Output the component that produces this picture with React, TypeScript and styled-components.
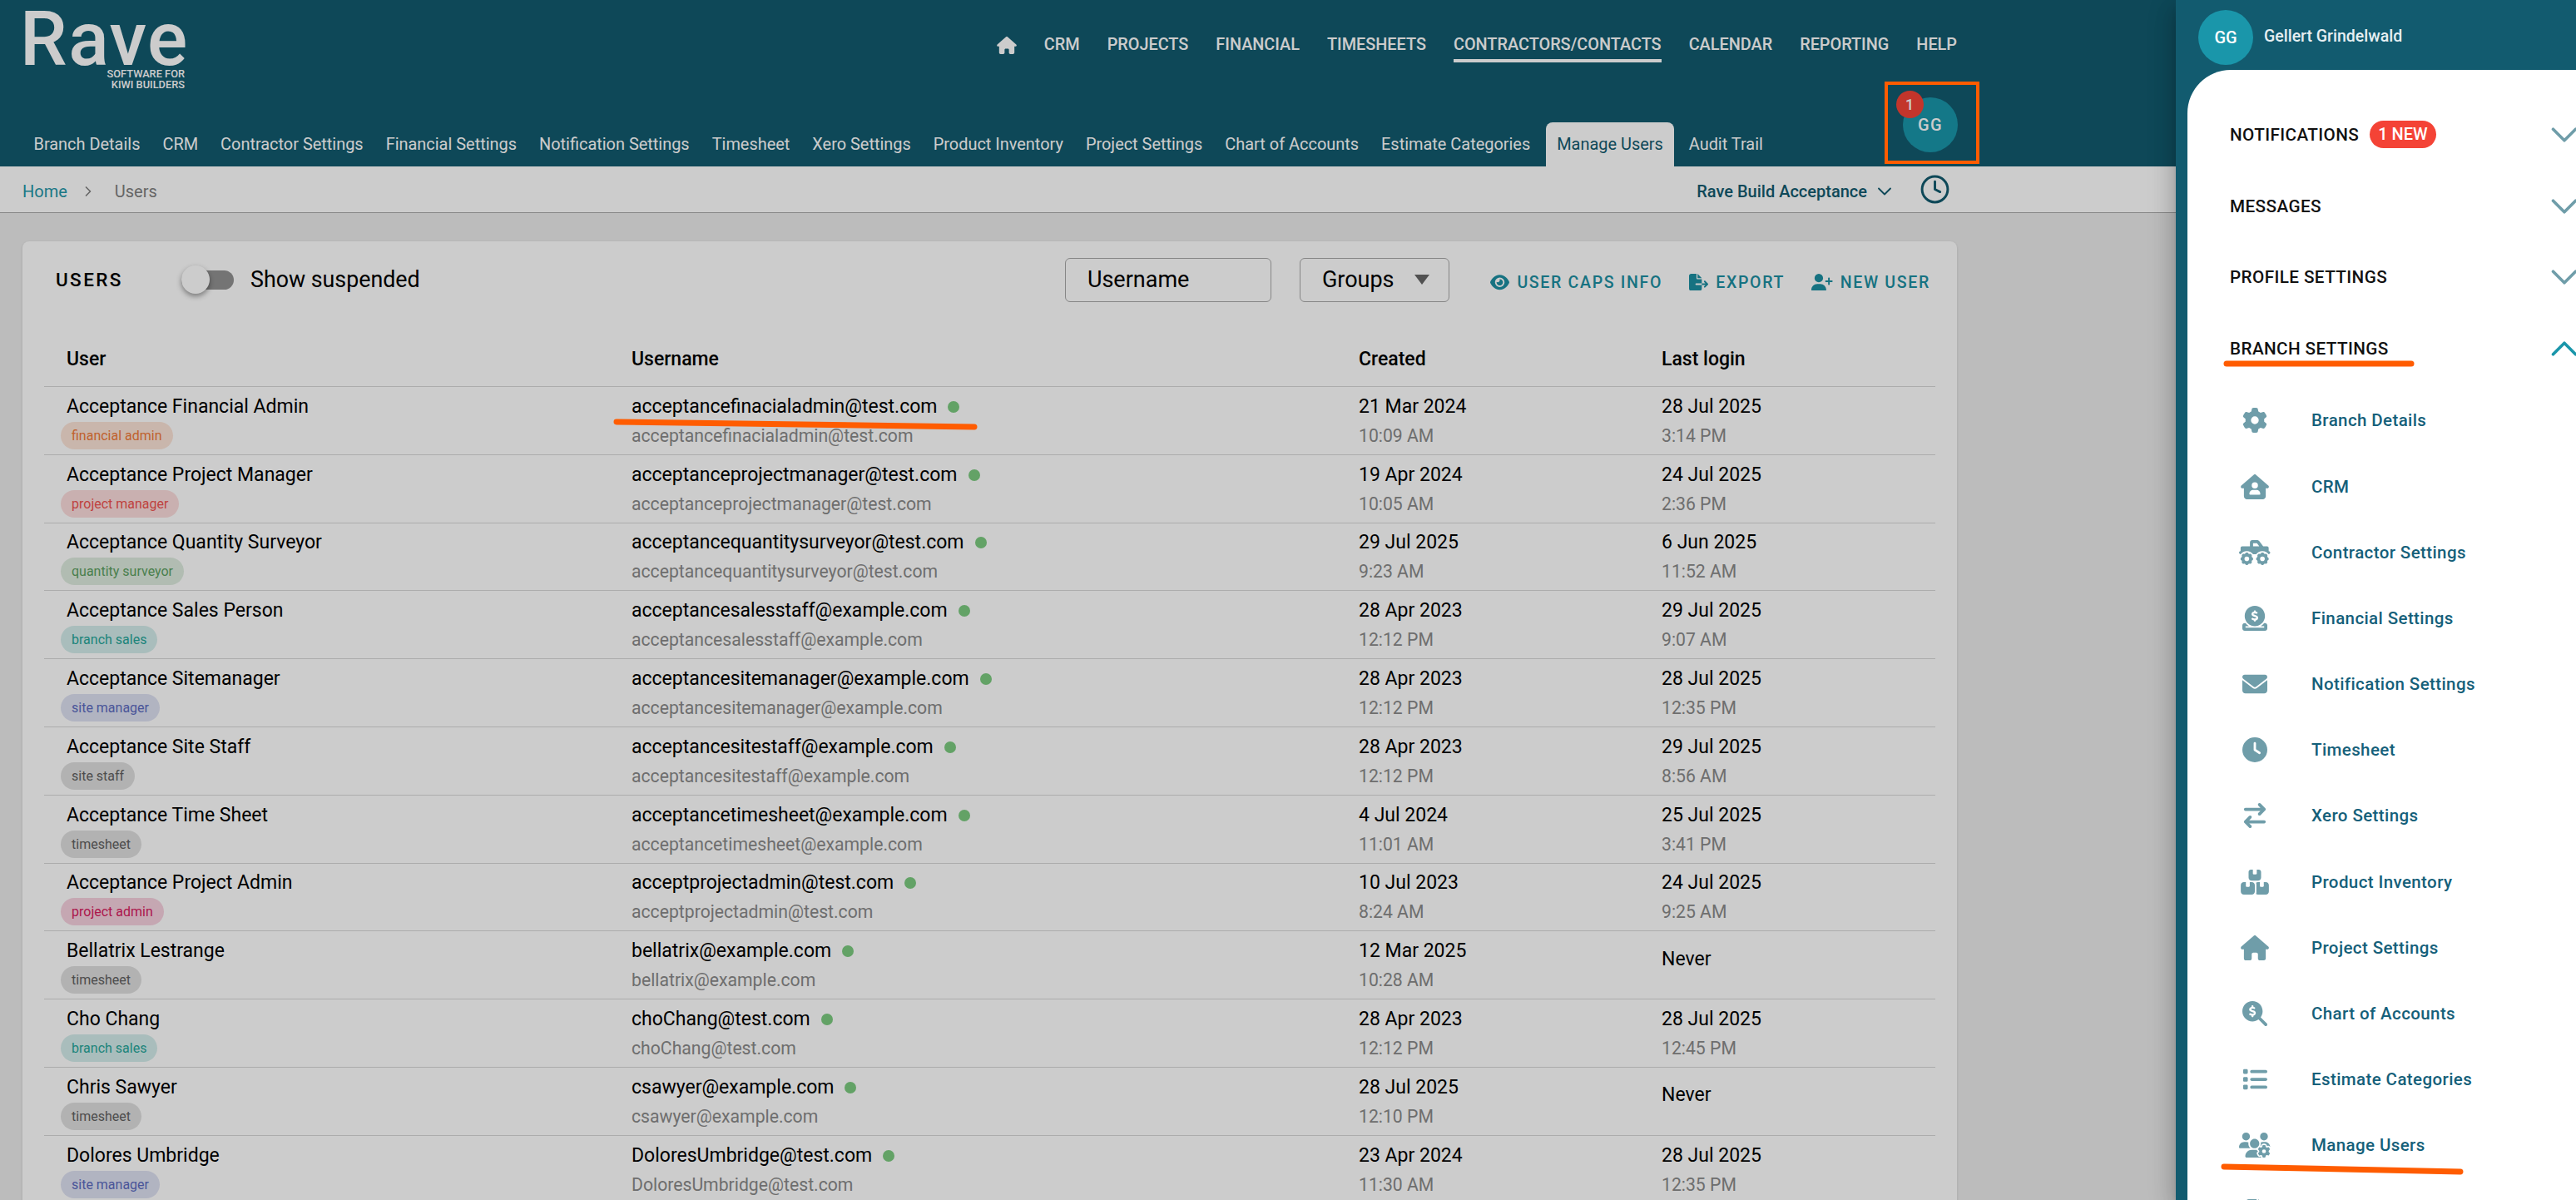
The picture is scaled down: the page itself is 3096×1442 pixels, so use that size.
import React from 'react';
import styled, { createGlobalStyle } from 'styled-components';
import {
  FaGear,
  FaHouseUser,
  FaTruckMonster,
  FaCircleDollarToSlot,
  FaEnvelope,
  FaClock,
  FaArrowRightArrowLeft,
  FaBoxesStacked,
  FaHouse,
  FaMagnifyingGlassDollar,
  FaList,
  FaUsersGear,
  FaFileExport,
  FaUserPlus,
  FaEye,
  FaFileLines,
} from 'react-icons/fa6';
import { FiChevronDown, FiChevronRight, FiChevronUp, FiClock } from 'react-icons/fi';

const teal = '#125b6f';
const accent = '#1a96aa';
const orange = '#ff5c00';

const GlobalStyle = createGlobalStyle`
  html, body {
    margin: 0;
    padding: 0;
    width: 3096px;
    height: 1442px;
    overflow: hidden;
    background: #ebebeb;
    font-family: Roboto, "Liberation Sans", sans-serif;
  }
  * { box-sizing: border-box; }
`;

const Page = styled.div`
  position: relative;
  width: 3096px;
  height: 1442px;
  overflow: hidden;
`;

const Header = styled.header`
  height: 200px;
  background: ${teal};
  color: #fff;
  display: flex;
  flex-direction: column;
  justify-content: space-between;
`;

const HeaderTop = styled.div`
  display: flex;
  justify-content: space-between;
  height: 100px;
  padding: 14px 744px 0 27px;
`;

const Logo = styled.div`
  display: flex;
  flex-direction: column;
  align-items: flex-end;
  width: 195px;
`;

const LogoWord = styled.div`
  width: 199px;
  margin-right: -1px;
  font-size: 90px;
  font-weight: 500;
  line-height: 68px;
  height: 70px;
  letter-spacing: 1.5px;
  color: #fff;
  white-space: nowrap;
`;

const LogoTag = styled.div`
  font-size: 12.8px;
  line-height: 13px;
  font-weight: 500;
`;

const MainNav = styled.nav`
  display: flex;
  align-items: center;
  gap: 33px;
  height: 80px;
`;

const MainNavItem = styled.a<{ $active?: boolean }>`
  font-size: 19.85px;
  font-weight: 500;
  line-height: 34px;
  margin-top: 4px;
  border-bottom: 4px solid ${(p) => (p.$active ? '#fff' : 'transparent')};
`;

const HomeIcon = styled(FaHouse)`
  width: 24px;
  height: 21px;
`;

const HeaderBottom = styled.div`
  display: flex;
  align-items: flex-end;
  justify-content: space-between;
  padding: 0 743px 0 27px;
`;

const SubNav = styled.nav`
  display: flex;
  align-items: flex-end;
`;

const SubNavItem = styled.a<{ $active?: boolean }>`
  height: 53px;
  line-height: 54px;
  padding: 0 13.5px;
  margin: ${(p) => (p.$active ? '0 4px 0 5px' : '0')};
  font-size: 19.93px;
  white-space: nowrap;
  border-radius: 8px 8px 0 0;
  background: ${(p) => (p.$active ? '#fff' : 'transparent')};
  color: ${(p) => (p.$active ? teal : '#fff')};
`;

const AvatarWrap = styled.div`
  position: relative;
  margin-bottom: 17px;
`;

const UserAvatar = styled.div<{ $spaced?: boolean }>`
  width: 66px;
  height: 66px;
  border-radius: 50%;
  display: flex;
  align-items: center;
  justify-content: center;
  background: ${accent};
  color: #fff;
  font-size: 20px;
  font-weight: 500;
  letter-spacing: ${(p) => (p.$spaced ? '1.5px' : '0')};
  flex-shrink: 0;
`;

const AvatarBadge = styled.span`
  position: absolute;
  top: -8.5px;
  left: -8.5px;
  width: 33px;
  height: 33px;
  border-radius: 50%;
  background: #f44336;
  color: #fff;
  font-size: 18px;
  font-weight: 500;
  display: flex;
  align-items: center;
  justify-content: center;
`;

const Crumbs = styled.div`
  height: 56px;
  background: #fff;
  border-bottom: 1px solid #aaa;
  display: flex;
  align-items: center;
  padding: 4px 0 0 27px;
  font-size: 20px;
`;

const CrumbLink = styled.a`
  color: #2396a8;
`;

const CrumbSep = styled(FiChevronRight)`
  color: #808080;
  margin: 0 22px 0 15px;
  width: 20px;
  height: 20px;
`;

const CrumbCurrent = styled.span`
  color: #808080;
`;

const BranchPicker = styled.div`
  margin-left: auto;
  margin-right: 752px;
  display: flex;
  align-items: center;
  color: ${teal};
  font-size: 20px;
  font-weight: 500;
  gap: 7px;
`;

const PickerCaret = styled(FiChevronDown)`
  width: 28px;
  height: 28px;
  stroke-width: 1.6;
`;

const ClockBtn = styled(FiClock)`
  width: 37px;
  height: 37px;
  margin-left: 21px;
  margin-top: -4px;
  stroke-width: 1.9;
`;

const Content = styled.main`
  height: 1186px;
  background: #ebebeb;
  padding: 34px 744px 0 27px;
`;

const Card = styled.section`
  background: #fff;
  border-radius: 8px;
  height: 1200px;
  padding: 0 26px;
  box-shadow: 0 1px 3px rgba(0, 0, 0, 0.12);
`;

const Toolbar = styled.div`
  display: flex;
  align-items: center;
  height: 92px;
  padding: 0 6px 0 13px;
`;

const CardTitle = styled.h2`
  margin: 0 73px 0 1px;
  width: 78px;
  font-size: 22.5px;
  font-weight: 500;
  letter-spacing: 2.4px;
  white-space: nowrap;
  color: #000;
`;

const Toggle = styled.div`
  position: relative;
  width: 63px;
  height: 23px;
  margin-right: 20px;
  border-radius: 12px;
  background: #929292;
`;

const ToggleThumb = styled.span`
  position: absolute;
  top: -6px;
  left: 0;
  width: 34px;
  height: 34px;
  border-radius: 50%;
  background: #fff;
  box-shadow: 0 3px 6px rgba(0, 0, 0, 0.4);
`;

const ToggleLabel = styled.span`
  font-size: 26.8px;
  color: #000;
`;

const Spacer = styled.div`
  flex: 1;
`;

const FilterBox = styled.div<{ $w: number }>`
  width: ${(p) => p.$w}px;
  height: 53px;
  border: 1.5px solid #a8a8a8;
  border-radius: 6px;
  display: flex;
  align-items: center;
  justify-content: space-between;
  padding: 0 23px 0 26px;
  font-size: 27px;
  color: #000;
  margin-right: 34px;
`;

const FilterArrow = styled.span`
  width: 0;
  height: 0;
  border-left: 9px solid transparent;
  border-right: 9px solid transparent;
  border-top: 12px solid #666;
`;

const Actions = styled.div`
  display: flex;
  align-items: center;
  gap: 32px;
  margin-left: 15.5px;
`;

const ActionBtn = styled.a<{ $iconW: number }>`
  display: flex;
  align-items: center;
  gap: 9px;
  color: #1c8fa2;
  font-size: 19.5px;
  font-weight: 500;
  letter-spacing: 1.7px;
  margin-top: 6px;
  svg {
    width: ${(p) => p.$iconW}px;
    height: 20.5px;
  }
`;

const Grid = styled.div`
  display: grid;
  grid-template-columns: 679px 874px 364px 1fr;
  padding-left: 27px;
  align-items: center;
`;

const TableHead = styled(Grid)`
  height: 83px;
  padding-top: 17px;
  font-size: 23px;
  font-weight: 500;
  color: #000;
  border-bottom: 1px solid #d8d8d8;
`;

const Row = styled(Grid)`
  height: 81.8px;
  padding-top: 2px;
  border-bottom: 1px solid #d8d8d8;
`;

const Stack = styled.div<{ $lifted?: boolean }>`
  display: flex;
  flex-direction: column;
  align-items: flex-start;
  padding-bottom: ${(p) => (p.$lifted ? '16px' : '0')};
`;

const Primary = styled.div`
  display: flex;
  align-items: center;
  gap: 13px;
  font-size: 23px;
  line-height: 32px;
  height: 32px;
  color: #000;
  white-space: nowrap;
`;

const Secondary = styled.div`
  margin-top: 3px;
  font-size: 21.2px;
  line-height: 32px;
  color: #8a8a8a;
  white-space: nowrap;
`;

const Pill = styled.span<{ $color: string }>`
  margin-top: 2px;
  margin-left: -7px;
  padding: 0 13px;
  height: 33px;
  line-height: 33px;
  font-size: 16px;
  border-radius: 17px;
  color: ${(p) => p.$color};
  background: ${(p) => p.$color}33;
  white-space: nowrap;
`;

const OnlineDot = styled.span`
  width: 14px;
  height: 14px;
  border-radius: 50%;
  background: #7ccb80;
`;

const Dim = styled.div`
  position: absolute;
  inset: 0;
  background: rgba(0, 0, 0, 0.2);
`;

const Drawer = styled.aside`
  position: absolute;
  top: 0;
  right: 0;
  bottom: 0;
  width: 481px;
  background: ${teal};
  box-shadow: 0 8px 10px -5px rgba(0, 0, 0, 0.2), 0 16px 24px 2px rgba(0, 0, 0, 0.14),
    0 6px 30px 5px rgba(0, 0, 0, 0.12);
  display: flex;
  flex-direction: column;
`;

const DrawerHead = styled.div`
  height: 84px;
  display: flex;
  align-items: center;
  padding: 6px 0 0 27px;
  gap: 13px;
`;

const DrawerName = styled.div`
  color: #e6eff2;
  font-size: 19.5px;
  font-weight: 500;
  margin-bottom: 4px;
`;

const DrawerBody = styled.div`
  flex: 1;
  margin-left: 14px;
  background: #fff;
  border-top-left-radius: 52px;
  padding: 35px 0 0 51px;
  overflow: hidden;
`;

const Section = styled.div`
  height: 85.7px;
  display: flex;
  align-items: center;
  color: #111;
  font-size: 20.7px;
  font-weight: 500;
  letter-spacing: 0.4px;
`;

const NewBadge = styled.span`
  margin-left: 13px;
  height: 33px;
  line-height: 33px;
  padding: 0 10px;
  border-radius: 17px;
  background: #f44336;
  color: #fff;
  font-size: 20px;
  letter-spacing: 0;
`;

const Chevron = styled.span<{ $open?: boolean }>`
  margin-left: auto;
  margin-right: -13px;
  color: ${(p) => (p.$open ? accent : '#6f9da9')};
  width: 54px;
  height: 54px;
  flex-shrink: 0;
  svg {
    width: 54px;
    height: 54px;
    stroke-width: 1.6;
  }
`;

const SectionList = styled.div`
  margin-top: 4px;
`;

const DrawerItem = styled.a`
  display: flex;
  align-items: center;
  height: 79.2px;
  color: #15607a;
  font-size: 20.5px;
  font-weight: 500;
  letter-spacing: 0.4px;
`;

const DrawerIcon = styled.span<{ $w: number }>`
  width: 60px;
  margin-right: 38px;
  display: flex;
  justify-content: center;
  color: #6f9da9;
  svg {
    width: ${(p) => p.$w}px;
    height: 30px;
  }
`;

const Mark = styled.svg`
  position: absolute;
  pointer-events: none;
  overflow: visible;
`;

const UnderlineA = styled(Mark)`
  left: 737px;
  top: 502px;
`;

const UnderlineB = styled(Mark)`
  left: 2670px;
  top: 430px;
`;

const UnderlineC = styled(Mark)`
  left: 2668px;
  top: 1396px;
`;

const AvatarBox = styled.div`
  position: absolute;
  left: 2265px;
  top: 98px;
  width: 114px;
  height: 99px;
  border: 4px solid ${orange};
`;

const topNav = ['CRM', 'PROJECTS', 'FINANCIAL', 'TIMESHEETS', 'CONTRACTORS/CONTACTS', 'CALENDAR', 'REPORTING', 'HELP'];
const subNav = [
  'Branch Details',
  'CRM',
  'Contractor Settings',
  'Financial Settings',
  'Notification Settings',
  'Timesheet',
  'Xero Settings',
  'Product Inventory',
  'Project Settings',
  'Chart of Accounts',
  'Estimate Categories',
  'Manage Users',
  'Audit Trail',
];

const roleColors: Record<string, string> = {
  'financial admin': '#f07a3a',
  'project manager': '#ef5350',
  'quantity surveyor': '#5c9f61',
  'branch sales': '#26a69a',
  'site manager': '#5c6bc0',
  'site staff': '#616161',
  timesheet: '#616161',
  'project admin': '#d81b60',
};

const users = [
  ['Acceptance Financial Admin', 'financial admin', 'acceptancefinacialadmin@test.com', '21 Mar 2024', '10:09 AM', '28 Jul 2025', '3:14 PM'],
  ['Acceptance Project Manager', 'project manager', 'acceptanceprojectmanager@test.com', '19 Apr 2024', '10:05 AM', '24 Jul 2025', '2:36 PM'],
  ['Acceptance Quantity Surveyor', 'quantity surveyor', 'acceptancequantitysurveyor@test.com', '29 Jul 2025', '9:23 AM', '6 Jun 2025', '11:52 AM'],
  ['Acceptance Sales Person', 'branch sales', 'acceptancesalesstaff@example.com', '28 Apr 2023', '12:12 PM', '29 Jul 2025', '9:07 AM'],
  ['Acceptance Sitemanager', 'site manager', 'acceptancesitemanager@example.com', '28 Apr 2023', '12:12 PM', '28 Jul 2025', '12:35 PM'],
  ['Acceptance Site Staff', 'site staff', 'acceptancesitestaff@example.com', '28 Apr 2023', '12:12 PM', '29 Jul 2025', '8:56 AM'],
  ['Acceptance Time Sheet', 'timesheet', 'acceptancetimesheet@example.com', '4 Jul 2024', '11:01 AM', '25 Jul 2025', '3:41 PM'],
  ['Acceptance Project Admin', 'project admin', 'acceptprojectadmin@test.com', '10 Jul 2023', '8:24 AM', '24 Jul 2025', '9:25 AM'],
  ['Bellatrix Lestrange', 'timesheet', 'bellatrix@example.com', '12 Mar 2025', '10:28 AM', 'Never', ''],
  ['Cho Chang', 'branch sales', 'choChang@test.com', '28 Apr 2023', '12:12 PM', '28 Jul 2025', '12:45 PM'],
  ['Chris Sawyer', 'timesheet', 'csawyer@example.com', '28 Jul 2025', '12:10 PM', 'Never', ''],
  ['Dolores Umbridge', 'site manager', 'DoloresUmbridge@test.com', '23 Apr 2024', '11:30 AM', '28 Jul 2025', '12:35 PM'],
];

// icon widths follow each glyph's viewBox at 30px height
const drawerItems: [string, React.ComponentType, number][] = [
  ['Branch Details', FaGear, 30],
  ['CRM', FaHouseUser, 34],
  ['Contractor Settings', FaTruckMonster, 37.5],
  ['Financial Settings', FaCircleDollarToSlot, 30],
  ['Notification Settings', FaEnvelope, 30],
  ['Timesheet', FaClock, 30],
  ['Xero Settings', FaArrowRightArrowLeft, 30],
  ['Product Inventory', FaBoxesStacked, 34],
  ['Project Settings', FaHouse, 34],
  ['Chart of Accounts', FaMagnifyingGlassDollar, 30],
  ['Estimate Categories', FaList, 30],
  ['Manage Users', FaUsersGear, 37.5],
  ['Audit Trail', FaFileLines, 22.5],
];

export default function App() {
  return (
    <Page>
      <GlobalStyle />
      <Header>
        <HeaderTop>
          <Logo>
            <LogoWord>Rave</LogoWord>
            <LogoTag>SOFTWARE FOR</LogoTag>
            <LogoTag>KIWI BUILDERS</LogoTag>
          </Logo>
          <MainNav>
            <HomeIcon />
            {topNav.map((item) => (
              <MainNavItem key={item} $active={item === 'CONTRACTORS/CONTACTS'}>
                {item}
              </MainNavItem>
            ))}
          </MainNav>
        </HeaderTop>
        <HeaderBottom>
          <SubNav>
            {subNav.map((item) => (
              <SubNavItem key={item} $active={item === 'Manage Users'}>
                {item}
              </SubNavItem>
            ))}
          </SubNav>
          <AvatarWrap>
            <UserAvatar $spaced>GG</UserAvatar>
            <AvatarBadge>1</AvatarBadge>
          </AvatarWrap>
        </HeaderBottom>
      </Header>
      <Crumbs>
        <CrumbLink>Home</CrumbLink>
        <CrumbSep />
        <CrumbCurrent>Users</CrumbCurrent>
        <BranchPicker>
          Rave Build Acceptance
          <PickerCaret />
          <ClockBtn />
        </BranchPicker>
      </Crumbs>
      <Content>
        <Card>
          <Toolbar>
            <CardTitle>USERS</CardTitle>
            <Toggle>
              <ToggleThumb />
            </Toggle>
            <ToggleLabel>Show suspended</ToggleLabel>
            <Spacer />
            <FilterBox $w={248}>Username</FilterBox>
            <FilterBox $w={180}>
              Groups
              <FilterArrow />
            </FilterBox>
            <Actions>
              <ActionBtn $iconW={23}>
                <FaEye />
                USER CAPS INFO
              </ActionBtn>
              <ActionBtn $iconW={23}>
                <FaFileExport />
                EXPORT
              </ActionBtn>
              <ActionBtn $iconW={25.6}>
                <FaUserPlus />
                NEW USER
              </ActionBtn>
            </Actions>
          </Toolbar>
          <TableHead>
            <div>User</div>
            <div>Username</div>
            <div>Created</div>
            <div>Last login</div>
          </TableHead>
          {users.map((u) => (
            <Row key={u[2]}>
              <Stack>
                <Primary>{u[0]}</Primary>
                <Pill $color={roleColors[u[1]]}>{u[1]}</Pill>
              </Stack>
              <Stack>
                <Primary>
                  {u[2]}
                  <OnlineDot />
                </Primary>
                <Secondary>{u[2]}</Secondary>
              </Stack>
              <Stack>
                <Primary>{u[3]}</Primary>
                <Secondary>{u[4]}</Secondary>
              </Stack>
              <Stack $lifted={!u[6]}>
                <Primary>{u[5]}</Primary>
                {u[6] && <Secondary>{u[6]}</Secondary>}
              </Stack>
            </Row>
          ))}
        </Card>
      </Content>
      <Dim />
      <Drawer>
        <DrawerHead>
          <UserAvatar>GG</UserAvatar>
          <DrawerName>Gellert Grindelwald</DrawerName>
        </DrawerHead>
        <DrawerBody>
          <Section>
            NOTIFICATIONS
            <NewBadge>1 NEW</NewBadge>
            <Chevron>
              <FiChevronDown />
            </Chevron>
          </Section>
          <Section>
            MESSAGES
            <Chevron>
              <FiChevronDown />
            </Chevron>
          </Section>
          <Section>
            PROFILE SETTINGS
            <Chevron>
              <FiChevronDown />
            </Chevron>
          </Section>
          <Section>
            BRANCH SETTINGS
            <Chevron $open>
              <FiChevronUp />
            </Chevron>
          </Section>
          <SectionList>
            {drawerItems.map(([label, Icon, width]) => (
              <DrawerItem key={label}>
                <DrawerIcon $w={width}>
                  <Icon />
                </DrawerIcon>
                {label}
              </DrawerItem>
            ))}
          </SectionList>
        </DrawerBody>
      </Drawer>
      <AvatarBox />
      <UnderlineA width="440" height="20">
        <path d="M4 5 L434 11" stroke={orange} strokeWidth="7" strokeLinecap="round" />
      </UnderlineA>
      <UnderlineB width="232" height="10">
        <path d="M6 7 L228 7" stroke={orange} strokeWidth="7" strokeLinecap="round" />
      </UnderlineB>
      <UnderlineC width="296" height="16">
        <path d="M5 6 L289 12" stroke={orange} strokeWidth="7" strokeLinecap="round" />
      </UnderlineC>
    </Page>
  );
}
